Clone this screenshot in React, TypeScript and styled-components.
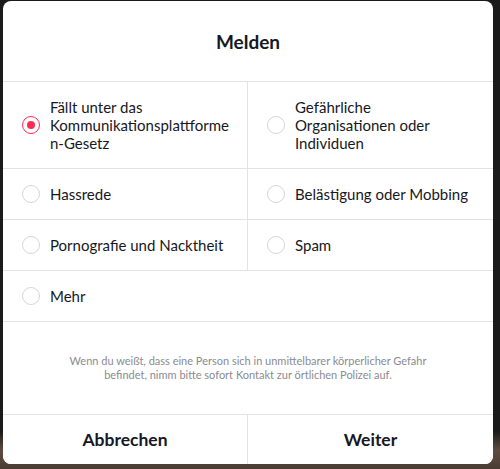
import React, { useState } from 'react'
import styled, { createGlobalStyle } from 'styled-components'

const GlobalStyle = createGlobalStyle`
  html, body {
    margin: 0;
    padding: 0;
    background: #141414;
  }
  body {
    font-family: Lato, 'Liberation Sans', sans-serif;
  }
`

const Backdrop = styled.div`
  width: 500px;
  height: 469px;
  box-sizing: border-box;
  padding: 1px 7px 0 3px;
  background: linear-gradient(to bottom, #1b1b1b 0%, #1b1b1b 92%, #5e4c3f 96%, #4a3c33 100%);
`

const Card = styled.div`
  width: 490px;
  height: 463px;
  background: #fff;
  border-radius: 8px;
  display: flex;
  flex-direction: column;
  overflow: hidden;
  color: #161823;
`

const Header = styled.div`
  height: 80px;
  display: flex;
  align-items: center;
  justify-content: center;
  border-bottom: 1px solid #e3e3e4;
  font-size: 19px;
  font-weight: 700;
`

const Grid = styled.div`
  display: grid;
  grid-template-columns: 245px 245px;
`

const Cell = styled.label<{ $tall?: boolean; $right?: boolean; $wide?: boolean }>`
  grid-column: ${p => (p.$wide ? 'span 2' : 'auto')};
  height: ${p => (p.$tall ? 86 : 50)}px;
  display: flex;
  align-items: center;
  gap: 10px;
  padding: 0 18px 0 19px;
  border-bottom: 1px solid #e3e3e4;
  border-right: ${p => (p.$right || p.$wide ? 'none' : '1px solid #e3e3e4')};
  box-sizing: content-box;
  font-size: 15px;
  line-height: 18px;
  cursor: pointer;
`

const Radio = styled.span<{ $on: boolean }>`
  flex: none;
  width: 18px;
  height: 18px;
  box-sizing: border-box;
  border-radius: 50%;
  border: 1px solid ${p => (p.$on ? '#fe2c55' : '#d6d6d8')};
  display: flex;
  align-items: center;
  justify-content: center;
  &::after {
    content: '';
    width: 8px;
    height: 8px;
    border-radius: 50%;
    background: #fe2c55;
    display: ${p => (p.$on ? 'block' : 'none')};
  }
`

const Note = styled.p`
  flex: 1;
  margin: 0;
  padding: 32px 52px 0;
  text-align: center;
  font-size: 11px;
  line-height: 14px;
  color: #8a8b91;
`

const Footer = styled.div`
  display: grid;
  grid-template-columns: 245px 245px;
  border-top: 1px solid #e3e3e4;
  height: 49px;
`

const Button = styled.button<{ $first?: boolean }>`
  border: none;
  border-right: ${p => (p.$first ? '1px solid #e3e3e4' : 'none')};
  background: #fff;
  font-family: inherit;
  font-size: 17.5px;
  font-weight: 700;
  color: #161823;
  cursor: pointer;
`

const options = [
  'Fällt unter das Kommunikationsplattforme n-Gesetz',
  'Gefährliche Organisationen oder Individuen',
  'Hassrede',
  'Belästigung oder Mobbing',
  'Pornografie und Nacktheit',
  'Spam',
  'Mehr',
]

export default function App() {
  const [picked, setPicked] = useState(0)
  return (
    <>
      <GlobalStyle />
      <Backdrop>
        <Card>
          <Header>Melden</Header>
          <Grid>
            {options.map((o, i) => (
              <Cell
                key={o}
                $tall={i < 2}
                $right={i % 2 === 1}
                $wide={i === options.length - 1}
                onClick={() => setPicked(i)}
              >
                <Radio $on={picked === i} />
                <span>{o}</span>
              </Cell>
            ))}
          </Grid>
          <Note>
            Wenn du weißt, dass eine Person sich in unmittelbarer körperlicher Gefahr befindet, nimm bitte sofort Kontakt zur örtlichen Polizei auf.
          </Note>
          <Footer>
            <Button $first>Abbrechen</Button>
            <Button>Weiter</Button>
          </Footer>
        </Card>
      </Backdrop>
    </>
  )
}
